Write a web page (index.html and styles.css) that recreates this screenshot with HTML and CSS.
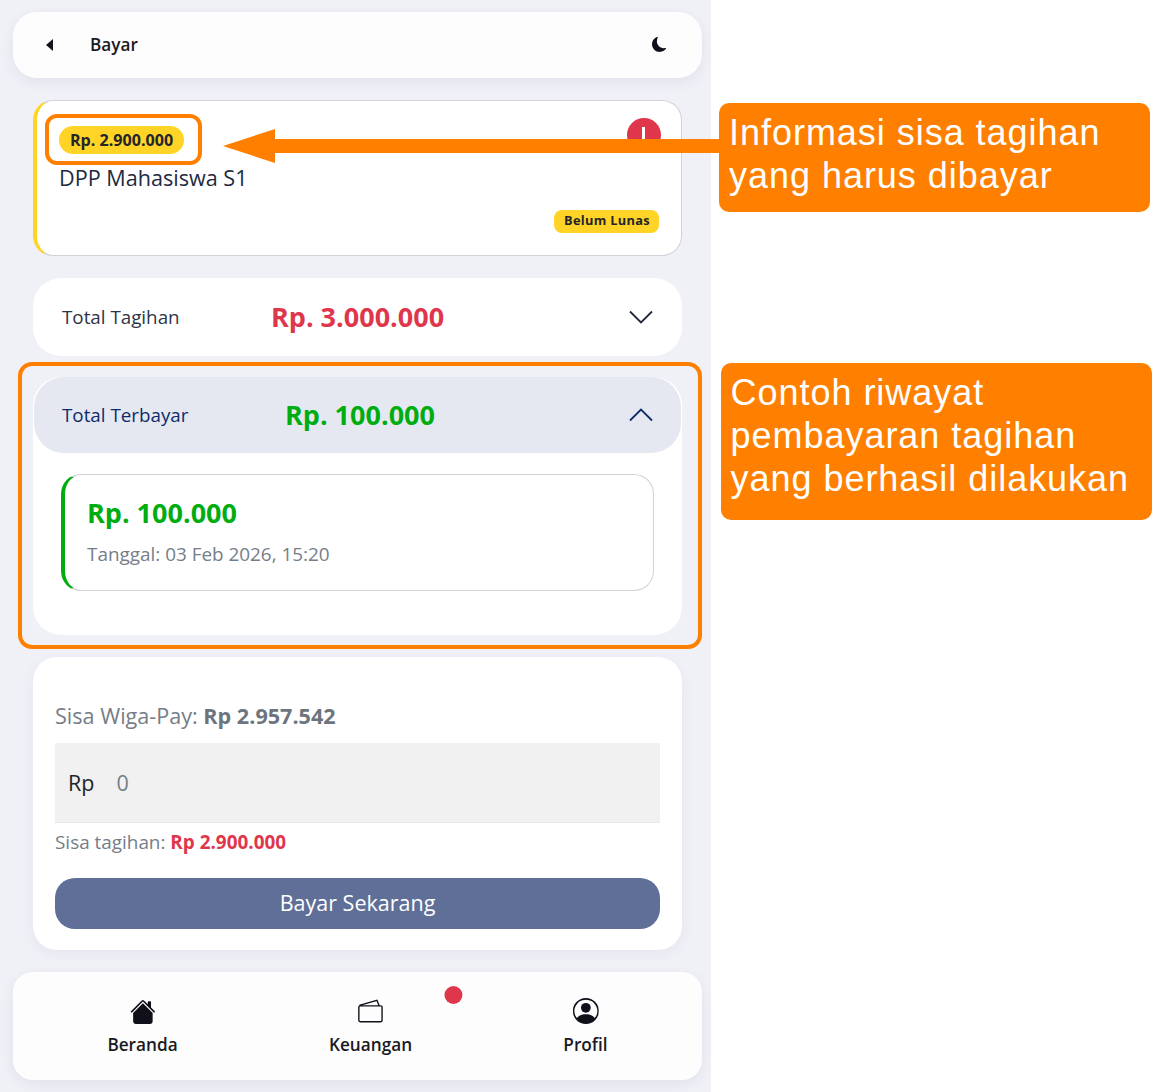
FILE: index.html
```html
<!DOCTYPE html>
<html lang="en">
<head>
  <meta charset="UTF-8">
  <meta name="viewport" content="width=device-width, initial-scale=1.0">
  <title>Bayar</title>
  <link rel="stylesheet" href="styles.css">
</head>
<body>
  <div id="app">
    <header class="top-bar">
      <span class="back-icon"></span>
      <span class="top-title">Bayar</span>
      <svg class="moon-icon" viewBox="0 0 16 16"><path d="M6 .278a.77.77 0 0 1 .08.858 7.2 7.2 0 0 0-.878 3.46c0 4.021 3.278 7.277 7.318 7.277q.792-.001 1.533-.16a.79.79 0 0 1 .81.316.73.73 0 0 1-.031.893A8.35 8.35 0 0 1 8.344 16C3.734 16 0 12.286 0 7.71 0 4.266 2.114 1.312 5.124.06A.75.75 0 0 1 6 .278"/></svg>
    </header>

    <section class="bill-card">
      <span class="amount-pill">Rp. 2.900.000</span>
      <span class="alert-dot"><i></i></span>
      <div class="bill-name">DPP Mahasiswa S1</div>
      <div class="bill-footer"><span class="status-pill">Belum Lunas</span></div>
    </section>

    <section class="row-card">
      <div class="row-head">
        <span class="row-label">Total Tagihan</span>
        <span class="row-value red">Rp. 3.000.000</span>
        <svg class="chevron" viewBox="0 0 24 14"><path d="M1 1.500l11 11 11-11"/></svg>
      </div>
    </section>

    <section class="row-card paid">
      <div class="row-head open">
        <span class="row-label">Total Terbayar</span>
        <span class="row-value green">Rp. 100.000</span>
        <svg class="chevron" viewBox="0 0 24 14"><path d="M1 12.500l11-11 11 11"/></svg>
      </div>
      <div class="history-wrap">
        <div class="history-card">
          <div class="history-amount">Rp. 100.000</div>
          <div class="history-date">Tanggal: 03 Feb 2026, 15:20</div>
        </div>
      </div>
    </section>

    <section class="pay-card">
      <div class="balance">Sisa Wiga-Pay: <b>Rp 2.957.542</b></div>
      <div class="pay-input"><span>Rp</span><span class="pay-zero">0</span></div>
      <div class="remaining">Sisa tagihan: <b>Rp 2.900.000</b></div>
      <button class="pay-button">Bayar Sekarang</button>
    </section>

    <nav class="bottom-nav">
      <div class="nav-item beranda">
        <svg class="nav-icon" viewBox="0 0 16 16"><path d="M8.700 1.500a1 1 0 0 0-1.400 0L.65 8.150a.5.5 0 0 0 .7.7L8 2.200l6.650 6.650a.5.5 0 0 0 .7-.7L13 5.800V2.500a.5.5 0 0 0-.5-.5h-1a.5.5 0 0 0-.5.5v1.300z"/><path d="M8 3.300l6 6v5.200A1.500 1.500 0 0 1 12.500 16h-9A1.500 1.500 0 0 1 2 14.500V9.300z"/></svg>
        <span>Beranda</span>
      </div>
      <div class="nav-item keuangan">
        <svg class="nav-icon" viewBox="0 0 28 26"><path class="line" d="M3 7.500h22a1.500 1.500 0 0 1 1.500 1.500v14a1.500 1.500 0 0 1-1.500 1.500H3A1.500 1.500 0 0 1 1.500 23V9A1.500 1.500 0 0 1 3 7.500zM2 7l19-5.500 2.500 6"/></svg>
        <span>Keuangan</span>
        <i class="nav-dot"></i>
      </div>
      <div class="nav-item profil">
        <svg class="nav-icon" viewBox="0 0 16 16"><path d="M11 6a3 3 0 1 1-6 0 3 3 0 0 1 6 0"/><path fill-rule="evenodd" d="M0 8a8 8 0 1 1 16 0A8 8 0 0 1 0 8m8-7a7 7 0 0 0-5.468 11.370C3.242 11.226 4.805 10 8 10s4.757 1.225 5.468 2.370A7 7 0 0 0 8 1"/></svg>
        <span>Profil</span>
      </div>
    </nav>
  </div>

  <!-- tutorial annotations drawn over the screenshot -->
  <div class="mark mark-amount"></div>
  <div class="mark mark-paid"></div>
  <div class="arrow-line"></div>
  <div class="arrow-head"></div>
  <div class="note note-one">Informasi sisa tagihan<br>yang harus dibayar</div>
  <div class="note note-two">Contoh riwayat<br>pembayaran tagihan<br>yang berhasil dilakukan</div>
</body>
</html>
```

FILE: styles.css
```css
html, body {
  margin: 0;
  background: #fff;
}

body {
  width: 1163px;
  height: 1092px;
  position: relative;
  overflow: hidden;
  font-family: "Open Sans", sans-serif;
}

#app {
  width: 711px;
  height: 1092px;
  box-sizing: border-box;
  background: #f0f0f7;
  padding: 12px 9px 12px 13px;
  display: flex;
  flex-direction: column;
}

.top-bar {
  height: 66px;
  flex: none;
  background: #fdfdfe;
  border-radius: 24px;
  box-shadow: 0 4px 14px rgba(40, 40, 80, 0.07);
  display: flex;
  align-items: center;
  padding: 0 35px 0 33px;
}

.back-icon {
  width: 0;
  height: 0;
  border-top: 6px solid transparent;
  border-bottom: 6px solid transparent;
  border-right: 7px solid #14141c;
}

.top-title {
  margin-left: 37px;
  margin-top: -1px;
  font-size: 17.200px;
  font-weight: 600;
  color: #1a1a22;
  flex: 1;
}

.moon-icon {
  width: 15px;
  height: 15px;
  fill: #10101a;
  margin-top: -1px;
}

.bill-card {
  height: 156px;
  flex: none;
  box-sizing: border-box;
  margin: 22px 20px 22px 20px;
  background: #fff;
  border: 1px solid #d2d2d8;
  border-left: 4px solid #ffd426;
  border-radius: 20px;
  padding: 25px 22px 22px 22px;
  position: relative;
  display: flex;
  flex-direction: column;
  align-items: flex-start;
}

.amount-pill {
  background: #ffd426;
  color: #24242c;
  font-size: 16.100px;
  font-weight: 700;
  line-height: 28px;
  padding: 0 11px;
  border-radius: 14px;
}

.alert-dot {
  position: absolute;
  top: 17px;
  right: 20px;
  width: 34px;
  height: 34px;
  border-radius: 50%;
  background: #e0364c;
}

.alert-dot i {
  position: absolute;
  left: 15px;
  top: 9px;
  width: 3px;
  height: 14px;
  background: #fff;
}

.bill-name {
  margin-top: 9px;
  font-size: 21.600px;
  line-height: 29px;
  color: #212a3f;
}

.bill-footer {
  margin-top: auto;
  width: 100%;
  display: flex;
  justify-content: flex-end;
}

.status-pill {
  background: #ffd426;
  color: #24242c;
  font-size: 12.800px;
  font-weight: 700;
  line-height: 21px;
  padding: 0 9px 2px 10px;
  border-radius: 8px;
  letter-spacing: 0.32px;
}

.row-card {
  flex: none;
  margin: 0 20px 21px 20px;
  background: #fff;
  border-radius: 28px;
}

.row-head {
  height: 78px;
  display: flex;
  align-items: center;
  padding: 0 29px;
  border-radius: 30px;
  position: relative;
}

.row-head.open {
  height: 76px;
  margin: 0 1px;
  padding: 0 28px;
  background: #e5e8f1;
}

.row-label {
  font-size: 18.800px;
  color: #2e3346;
  width: 209px;
}

.open .row-label {
  color: #0d2b6b;
  width: 223px;
}

.row-value {
  flex: 1;
  font-size: 27px;
  font-weight: 700;
  margin-top: -1px;
}

.red { color: #e0364c; }
.green { color: #00ad10; }

.chevron {
  width: 24px;
  height: 14px;
  fill: none;
  stroke: #22283a;
  stroke-width: 1.800;
  margin-top: -1px;
}

.open .chevron {
  stroke: #0d2b6b;
}

.paid {
  height: 258px;
  margin-bottom: 22px;
}

.history-wrap {
  padding: 21px 28px 0 28px;
}

.history-card {
  height: 117px;
  box-sizing: border-box;
  border: 1px solid #d2d2d8;
  border-left: 4px solid #00ad10;
  border-radius: 20px;
  padding: 20px 22px;
}

.history-amount {
  font-size: 27px;
  font-weight: 700;
  line-height: 36px;
  color: #00ad10;
}

.history-date {
  margin-top: 10px;
  font-size: 18.900px;
  line-height: 26px;
  color: #757d88;
}

.pay-card {
  height: 293px;
  flex: none;
  box-sizing: border-box;
  margin: 0 20px 22px 20px;
  background: #fff;
  border-radius: 24px;
  box-shadow: 0 4px 14px rgba(40, 40, 80, 0.05);
  padding: 44px 22px 0 22px;
}

.balance {
  font-size: 21.600px;
  line-height: 30px;
  color: #757d88;
}

.balance b {
  color: #6c757d;
}

.pay-input {
  margin-top: 12px;
  height: 80px;
  background: #f1f1f1;
  border-bottom: 1px solid #e9e9e9;
  box-sizing: border-box;
  display: flex;
  align-items: center;
  gap: 22px;
  padding-left: 13px;
  font-size: 21.500px;
  color: #212529;
}

.pay-zero {
  color: #757d88;
}

.remaining {
  margin-top: 6px;
  font-size: 18.900px;
  line-height: 26px;
  color: #757d88;
}

.remaining b {
  color: #e0364c;
}

.pay-button {
  display: block;
  width: 100%;
  height: 51px;
  margin-top: 23px;
  padding: 0 0 2px 0;
  border: none;
  border-radius: 20px;
  background: #5f6f97;
  color: #fff;
  font-family: inherit;
  font-size: 21.500px;
}

.bottom-nav {
  height: 108px;
  flex: none;
  background: #fdfdfe;
  border-radius: 20px;
  box-shadow: 0 4px 14px rgba(40, 40, 80, 0.07);
  position: relative;
}

.nav-item {
  position: absolute;
  top: 26px;
  display: flex;
  flex-direction: column;
  align-items: center;
  font-size: 17.200px;
  font-weight: 600;
  color: #1a1a22;
  transform: translateX(-50%);
}

.beranda { left: 129.500px; }
.keuangan { left: 357.500px; }
.profil { left: 572.500px; }

.nav-icon {
  width: 26px;
  height: 26px;
  margin-bottom: 9px;
  fill: #10101a;
}

.nav-icon .line {
  fill: none;
  stroke: #10101a;
  stroke-width: 1.500;
}

.nav-dot {
  position: absolute;
  top: -12px;
  right: -50px;
  width: 18px;
  height: 18px;
  border-radius: 50%;
  background: #e0364c;
}

.mark {
  position: absolute;
  box-sizing: border-box;
  border: 4px solid #ff8000;
}

.mark-amount {
  left: 45px;
  top: 114px;
  width: 157px;
  height: 51px;
  border-radius: 12px;
}

.mark-paid {
  left: 18px;
  top: 362px;
  width: 684px;
  height: 287px;
  border-radius: 14px;
}

.arrow-line {
  position: absolute;
  left: 270px;
  top: 139px;
  width: 450px;
  height: 14px;
  background: #ff8000;
}

.arrow-head {
  position: absolute;
  left: 223px;
  top: 129px;
  width: 0;
  height: 0;
  border-top: 17px solid transparent;
  border-bottom: 17px solid transparent;
  border-right: 52px solid #ff8000;
}

.note {
  position: absolute;
  box-sizing: border-box;
  width: 431px;
  background: #ff8000;
  color: #fff;
  border-radius: 10px;
  font-family: "Liberation Sans", sans-serif;
  font-size: 36px;
  line-height: 43px;
  letter-spacing: 0.97px;
  padding: 8px 10px;
}

.note-one {
  left: 719px;
  top: 103px;
  height: 109px;
}

.note-two {
  left: 721px;
  top: 363px;
  height: 157px;
  padding-left: 9.500px;
}
```
